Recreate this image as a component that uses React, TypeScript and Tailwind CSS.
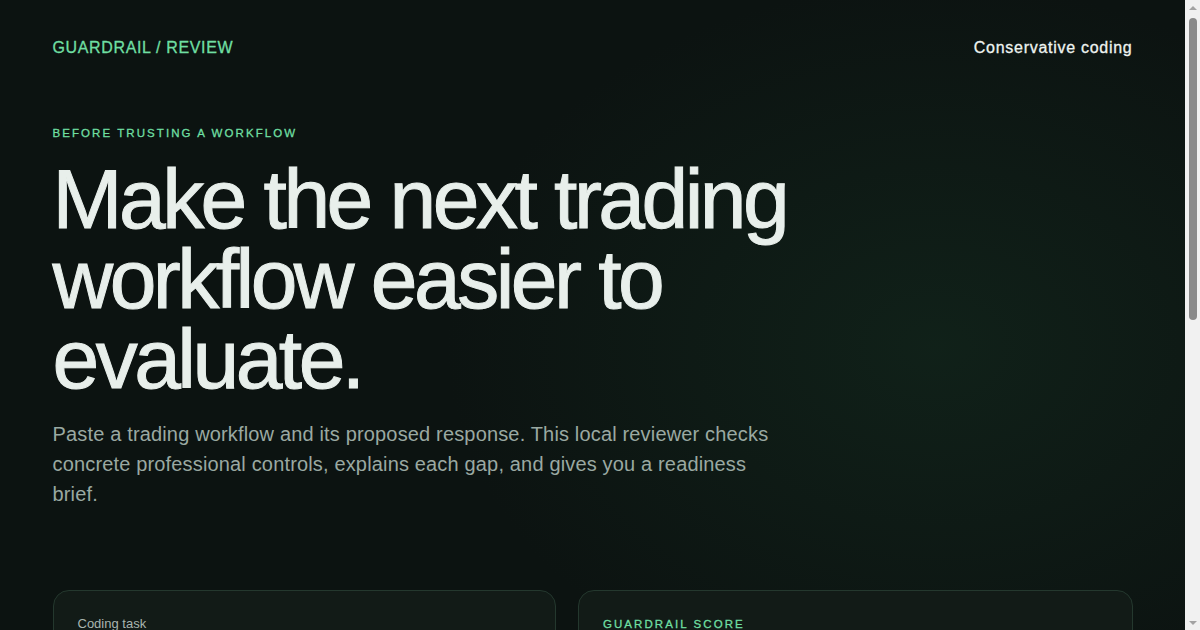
import React from "react";

function FakeScrollbar() {
  return (
    <div className="fixed right-0 top-0 z-50 flex h-screen w-[15px] flex-col items-center bg-[#f1f1f1]">
      <div className="flex h-[15px] w-full items-center justify-center">
        <div className="h-0 w-0 border-x-[4px] border-b-[4px] border-x-transparent border-b-[#a3a3a3]" />
      </div>
      <div className="mt-[3px] h-[302px] w-[8px] rounded-full bg-[#8a8a8a]" />
      <div className="flex-1" />
      <div className="flex h-[15px] w-full items-center justify-center">
        <div className="h-0 w-0 border-x-[4px] border-t-[4px] border-x-transparent border-t-[#a3a3a3]" />
      </div>
    </div>
  );
}

export default function App() {
  return (
    <div
      className="min-h-screen w-full bg-[#0c1311] pr-[15px] text-[#e8efeb]"
      style={{
        fontFamily: '"Liberation Sans", Arial, sans-serif',
        backgroundImage:
          "radial-gradient(ellipse 700px 520px at 78% 28%, rgba(22,52,36,0.42), rgba(12,19,17,0) 70%)",
      }}
    >
      <FakeScrollbar />
      <div className="mx-auto max-w-[1080px]">
        <header className="flex items-center justify-between pt-[38px]">
          <div className="text-[16px] leading-[20px] tracking-[0.04em] text-[#6fdfa2] [-webkit-text-stroke-width:0.3px]">GUARDRAIL / REVIEW</div>
          <div className="text-[16px] leading-[20px] tracking-[0.045em] text-[#eef3f0] [-webkit-text-stroke-width:0.3px]">Conservative coding</div>
        </header>

        <section className="pt-[68px]">
          <div className="text-[11.5px] leading-[14px] tracking-[0.18em] text-[#6fdfa2] [-webkit-text-stroke-width:0.3px]">BEFORE TRUSTING A WORKFLOW</div>
          <h1 className="mt-[19px] max-w-[800px] text-[84px] leading-[80px] tracking-[-0.042em] text-[#e8efeb] [-webkit-text-stroke-width:1px]">
            Make the next trading workflow easier to evaluate.
          </h1>
          <p className="mt-[20px] max-w-[730px] text-[20px] leading-[30px] tracking-[0.008em] text-[#9aa9a2]">
            Paste a trading workflow and its proposed response. This local reviewer checks concrete professional controls, explains each gap, and gives you a readiness brief.
          </p>
        </section>

        <section className="mt-[81px] grid grid-cols-[minmax(0,0.908fr)_minmax(0,1fr)] gap-[22px] pb-[80px]">
          <div className="rounded-[16px] border border-[#24382e] bg-[#121b17] p-[24px]">
            <div className="text-[13px] leading-[18px] text-[#a9b5af]">Coding task</div>
            <div className="mt-[10px] h-[160px] rounded-[10px] border border-[#24382e] bg-[#0d1512]" />
            <div className="mt-[18px] text-[13px] leading-[18px] text-[#a9b5af]">Proposed response</div>
            <div className="mt-[10px] h-[220px] rounded-[10px] border border-[#24382e] bg-[#0d1512]" />
            <div className="mt-[20px] inline-flex h-[44px] items-center rounded-[10px] bg-[#6fdfa2] px-[20px] text-[15px] text-[#0c1311]">
              Review workflow
            </div>
          </div>
          <div className="rounded-[16px] border border-[#24382e] bg-[#121b17] p-[24px]">
            <div className="text-[11.5px] leading-[18px] tracking-[0.18em] text-[#6fdfa2] [-webkit-text-stroke-width:0.3px]">GUARDRAIL SCORE</div>
            <div className="mt-[12px] text-[56px] leading-[60px] tracking-[-0.04em] text-[#e8efeb]">—</div>
            <div className="mt-[8px] text-[15px] leading-[22px] text-[#9aa9a2]">Paste a workflow to see its readiness brief.</div>
            <div className="mt-[24px] flex flex-col gap-[12px]">
              {["Position sizing limits", "Stop-loss and exit rules", "Data validation", "Error handling", "Audit logging"].map((t) => (
                <div key={t} className="flex items-center justify-between rounded-[10px] border border-[#24382e] bg-[#0d1512] px-[16px] py-[14px] text-[14px] text-[#c9d4ce]">
                  <span>{t}</span>
                  <span className="text-[#6b7a73]">Pending</span>
                </div>
              ))}
            </div>
          </div>
        </section>
      </div>
    </div>
  );
}
